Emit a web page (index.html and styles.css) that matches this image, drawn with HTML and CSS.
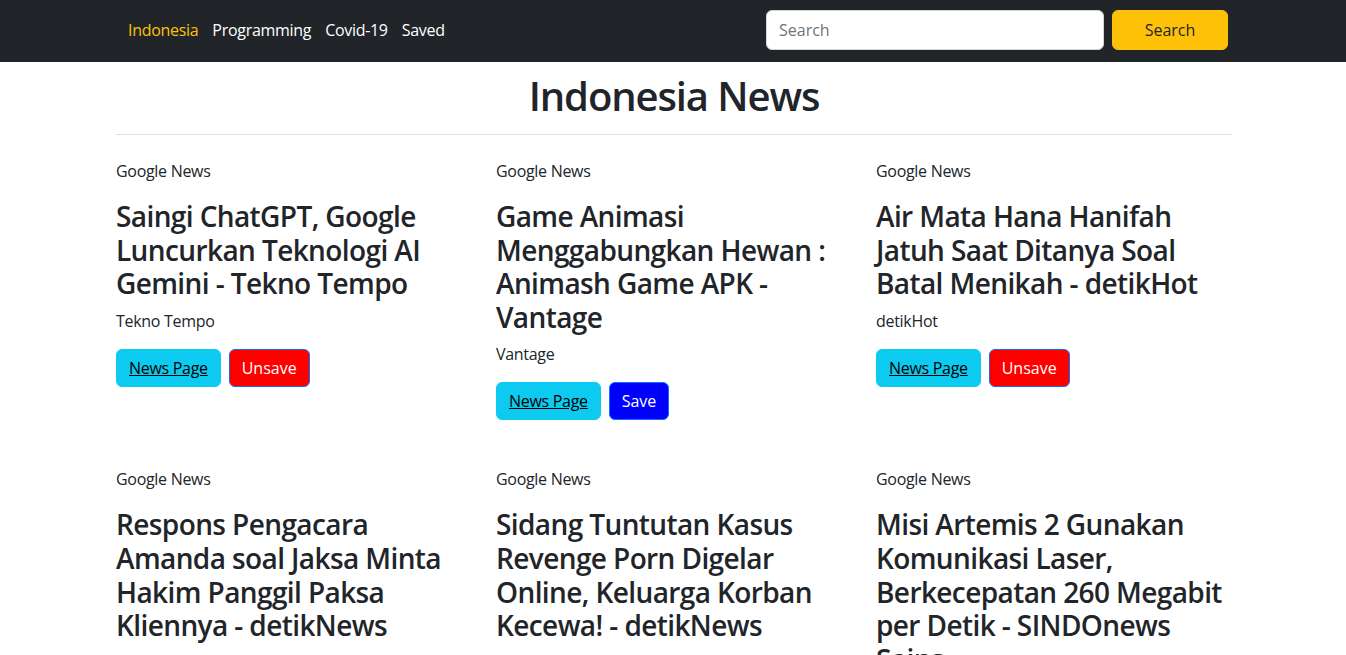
FILE: index.html
```html
<!DOCTYPE html>
<html lang="id">
<head>
<meta charset="utf-8">
<title>Indonesia News</title>
<link rel="stylesheet" href="styles.css">
</head>
<body>
<nav class="navbar">
  <div class="container nav-inner">
    <ul class="nav-links">
      <li><a class="nav-link active" href="#">Indonesia</a></li>
      <li><a class="nav-link" href="#">Programming</a></li>
      <li><a class="nav-link" href="#">Covid-19</a></li>
      <li><a class="nav-link" href="#">Saved</a></li>
    </ul>
    <form class="search-form">
      <input class="search-input" type="search" placeholder="Search">
      <button class="search-btn" type="button">Search</button>
    </form>
  </div>
</nav>
<main class="container">
  <h1 class="page-title">Indonesia News</h1>
  <hr class="divider">
  <div class="news-grid">
    <article class="card">
      <p class="card-meta">Google News</p>
      <h3 class="card-title">Saingi ChatGPT, Google Luncurkan Teknologi AI Gemini - Tekno Tempo</h3>
      <p class="card-source">Tekno Tempo</p>
      <div class="card-actions"><a class="btn btn-info" href="#">News Page</a><button class="btn btn-unsave">Unsave</button></div>
    </article>
    <article class="card">
      <p class="card-meta">Google News</p>
      <h3 class="card-title">Game Animasi Menggabungkan Hewan : Animash Game APK - Vantage</h3>
      <p class="card-source">Vantage</p>
      <div class="card-actions"><a class="btn btn-info" href="#">News Page</a><button class="btn btn-save">Save</button></div>
    </article>
    <article class="card">
      <p class="card-meta">Google News</p>
      <h3 class="card-title">Air Mata Hana Hanifah Jatuh Saat Ditanya Soal Batal Menikah - detikHot</h3>
      <p class="card-source">detikHot</p>
      <div class="card-actions"><a class="btn btn-info" href="#">News Page</a><button class="btn btn-unsave">Unsave</button></div>
    </article>
    <article class="card">
      <p class="card-meta">Google News</p>
      <h3 class="card-title">Respons Pengacara Amanda soal Jaksa Minta Hakim Panggil Paksa Kliennya - detikNews</h3>
      <p class="card-source">detikNews</p>
      <div class="card-actions"><a class="btn btn-info" href="#">News Page</a><button class="btn btn-save">Save</button></div>
    </article>
    <article class="card">
      <p class="card-meta">Google News</p>
      <h3 class="card-title">Sidang Tuntutan Kasus Revenge Porn Digelar Online, Keluarga Korban Kecewa! - detikNews</h3>
      <p class="card-source">detikNews</p>
      <div class="card-actions"><a class="btn btn-info" href="#">News Page</a><button class="btn btn-save">Save</button></div>
    </article>
    <article class="card">
      <p class="card-meta">Google News</p>
      <h3 class="card-title">Misi Artemis 2 Gunakan Komunikasi Laser, Berkecepatan 260 Megabit per Detik - SINDOnews Sains</h3>
      <p class="card-source">SINDOnews Sains</p>
      <div class="card-actions"><a class="btn btn-info" href="#">News Page</a><button class="btn btn-save">Save</button></div>
    </article>
  </div>
</main>
</body>
</html>
```
FILE: styles.css
```css
* { box-sizing: border-box; }
html, body { margin: 0; }
body {
  font-family: "Open Sans", "Noto Sans", "Liberation Sans", sans-serif;
  font-size: 16px;
  line-height: 1.5;
  letter-spacing: -0.3px;
  color: #212529;
  background: #fff;
}
.container {
  max-width: 1140px;
  margin: 0 auto;
  padding: 0 11px 0 13px;
}
.navbar {
  background: #212529;
  padding: 10px 0 12px;
}
.nav-inner {
  display: flex;
  align-items: center;
  justify-content: space-between;
  height: 40px;
}
.nav-links {
  list-style: none;
  margin: 0;
  padding: 0 0 0 5px;
  display: flex;
}
.nav-link {
  display: block;
  padding: 8px 7px;
  color: #fff;
  text-decoration: none;
}
.nav-link.active { color: #ffc107; }
.search-form {
  display: flex;
  gap: 8px;
  padding-right: 4px;
}
.search-input {
  width: 338px;
  height: 40px;
  border: 1px solid #ced4da;
  border-radius: 6px;
  padding: 6px 12px;
  font: inherit;
  color: #212529;
  background: #fff;
}
.search-input::placeholder { color: #6c757d; }
.search-btn {
  width: 116px;
  height: 40px;
  border: 1px solid #ffc107;
  border-radius: 6px;
  background: #ffc107;
  color: #212529;
  font: inherit;
}
.page-title {
  margin: 10px 0 14px;
  text-align: center;
  font-size: 40px;
  font-weight: 600;
  letter-spacing: -1.1px;
  line-height: 1.2;
}
.divider {
  border: 0;
  border-top: 1px solid #dee2e6;
  margin: 0;
}
.news-grid {
  display: grid;
  grid-template-columns: repeat(3, 1fr);
  column-gap: 24px;
  row-gap: 47px;
  padding-top: 24px;
}
.card p { margin: 0; }
.card-meta { margin-bottom: 17px !important; }
.card-title {
  margin: 0 0 8px;
  font-size: 28px;
  font-weight: 600;
  letter-spacing: -0.6px;
  line-height: 1.2;
}
.card-source { margin-bottom: 16px !important; }
.card-actions {
  display: flex;
  gap: 8px;
}
.btn {
  display: inline-block;
  padding: 6px 12px;
  border-radius: 6px;
  border: 1px solid transparent;
  font: inherit;
  line-height: 24px;
  cursor: pointer;
}
.btn-info {
  background: #0dcaf0;
  border-color: #0dcaf0;
  color: #000;
  text-decoration: underline;
}
.btn-unsave {
  background: #ff0000;
  border-color: #0d6efd;
  color: #fff;
}
.btn-save {
  background: #0000ff;
  border-color: #0d6efd;
  color: #fff;
}
```
